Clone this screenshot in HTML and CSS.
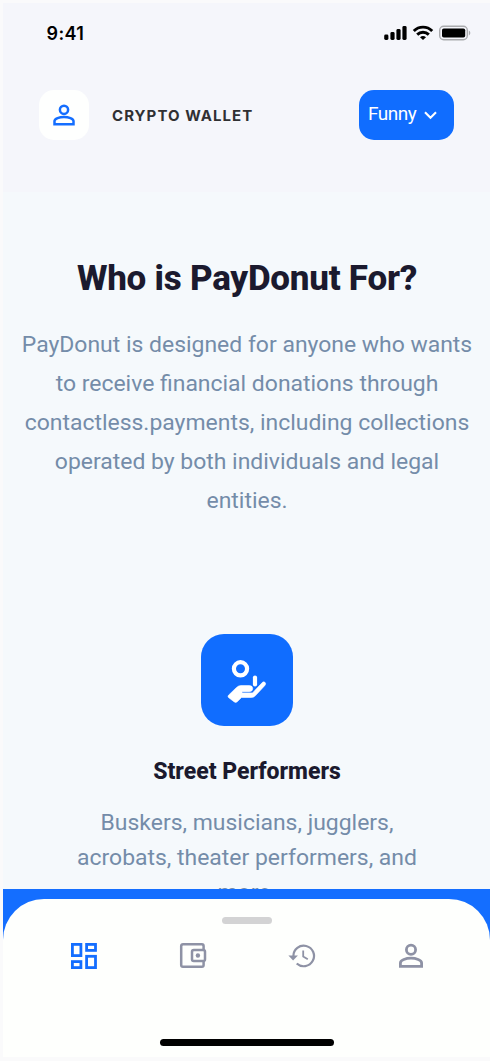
FILE: index.html
```html
<!DOCTYPE html>
<html lang="en">
<head>
<meta charset="utf-8">
<title>Crypto Wallet</title>
<link rel="stylesheet" href="styles.css">
</head>
<body>
<div class="phone">
  <header class="top">
    <div class="status">
      <span class="time">9:41</span>
      <svg class="status-icons" width="88" height="18" viewBox="0 0 88 18">
        <rect x="1.2" y="10.5" width="4.2" height="5.500" rx="1.400"/>
        <rect x="7.4" y="8" width="4.200" height="8" rx="1.400"/>
        <rect x="13.4" y="5" width="4.200" height="11" rx="1.400"/>
        <rect x="19.4" y="2" width="4.200" height="14" rx="1.400"/>
        <g fill="none" stroke="#000" stroke-width="2.900">
          <path d="M30.800 6.900a13 13 0 0 1 18.400 0"/>
          <path d="M34.200 10.600a8.300 8.300 0 0 1 11.600 0"/>
        </g>
        <path d="M37 13.200a4.600 4.600 0 0 1 6 0L40 16z"/>
        <rect x="56.700" y="2.200" width="27.600" height="13.600" rx="4" fill="none" stroke="#aaabae" stroke-width="1.400"/>
        <rect x="59" y="4.400" width="23.200" height="9.200" rx="1.800"/>
        <path d="M85.800 6.600c2 .8 2 4 0 4.800z" fill="#aaabae"/>
      </svg>
    </div>
    <div class="bar">
      <div class="avatar">
        <svg width="22" height="22" viewBox="0 0 22 22" fill="none" stroke="#146eff" stroke-width="2.500">
          <circle cx="11" cy="5.800" r="4.100"/>
          <path d="M1.500 20.200v-3.100c0-2.500 5-4.200 9.500-4.200s9.500 1.700 9.500 4.200v3.100z"/>
        </svg>
      </div>
      <span class="brand">CRYPTO WALLET</span>
      <div class="pill">
        <span>Funny</span>
        <svg width="13" height="9" viewBox="0 0 13 9" fill="none" stroke="#fff" stroke-width="2.100"><path d="M1 1.300l5.500 5.500L12 1.300"/></svg>
      </div>
    </div>
  </header>
  <main class="content">
    <h1 class="title">Who is PayDonut For?</h1>
    <p class="lead">PayDonut is designed for anyone who wants<br>to receive financial donations through<br>contactless.payments, including collections<br>operated by both individuals and legal<br>entities.</p>
    <div class="feature-icon">
      <svg width="40" height="44" viewBox="0 0 40 44">
        <circle cx="13.500" cy="8.800" r="6.600" fill="none" stroke="#fff" stroke-width="4.200"/>
        <path d="M28 17.500v7" stroke="#fff" stroke-width="4.200" stroke-linecap="round"/>
        <path d="M1.500 35.200 9.500 27.500Q11.500 25.600 14 25.600H22.500Q25.700 25.800 25.700 28.600T22.500 31.700H15V32.900H25.500L35.500 22.300Q37 21.300 38.100 22.500T37.900 25.400L28.500 35.600Q26.800 37.500 24.500 37.500H14.500L10.200 41.800Q8.600 43 7 41.700L1.500 37.500Q.600 36.400 1.500 35.200Z" fill="#fff" stroke="#fff" stroke-width=".6"/>
      </svg>
    </div>
    <h2 class="subtitle">Street Performers</h2>
    <p class="desc">Buskers, musicians, jugglers,<br>acrobats, theater performers, and<br>more.</p>
  </main>
  <footer class="dock">
    <div class="sheet">
      <div class="handle"></div>
      <nav class="tabs">
        <svg width="28" height="28" viewBox="0 0 28 28" fill="none" stroke="#146eff" stroke-width="2.800">
          <rect x="2.400" y="2.400" width="8.500" height="11.200"/><rect x="16.600" y="2.400" width="8.900" height="6"/>
          <rect x="2.400" y="19.600" width="8.500" height="6"/><rect x="16.600" y="14.300" width="8.900" height="11.300"/>
        </svg>
        <svg width="28" height="28" viewBox="0 0 28 28" fill="none" stroke="#8e92a5" stroke-width="2.500">
          <path d="M24.600 8V4q0-1.700-1.700-1.700H4Q2.200 2.300 2.200 4V23q0 1.800 1.800 1.800H22.900Q24.600 24.800 24.600 23V19"/>
          <rect x="13" y="8" width="13" height="11" rx="1.800"/><circle cx="18.900" cy="13.500" r="2.200" fill="#8e92a5" stroke="none"/>
        </svg>
        <svg width="28" height="28" viewBox="0 0 28 28" fill="none" stroke="#8e92a5" stroke-width="2.200">
          <path d="M5.400 14A10.300 10.300 0 1 1 8.700 21.500"/>
          <path d="M.4 13.500H9.900L5.100 18.600Z" fill="#8e92a5" stroke="none"/>
          <path d="M15.200 8.500V14.500L19.800 17.300" stroke-width="1.800"/>
        </svg>
        <svg width="28" height="28" viewBox="0 0 28 28" fill="none" stroke="#8e92a5" stroke-width="2.800">
          <circle cx="14" cy="7.800" r="4.600"/>
          <path d="M3.400 24.400v-3.500c0-2.800 5.600-4.700 10.600-4.700s10.600 1.900 10.600 4.700v3.500z"/>
        </svg>
      </nav>
      <div class="home"></div>
    </div>
  </footer>
</div>
</body>
</html>
```
FILE: styles.css
```css
* { box-sizing: border-box; }
body { margin: 0; background: #fafafb; overflow: hidden; }
.phone {
  height: 1061px;
  padding: 3px 0 4px 3px;
  display: flex;
  flex-direction: column;
  font-family: Roboto, sans-serif;
}
.top { height: 189px; flex: none; background: #f5f6fb; }
.status { display: flex; justify-content: space-between; padding: 20px 19px 0 43.5px; height: 87px; }
.time { font: 600 18px/22px Inter, sans-serif; letter-spacing: .4px; color: #000; }
.status-icons { margin-top: 1px; }
.bar { display: flex; align-items: center; padding: 0 36px; }
.avatar {
  width: 50px; height: 50px; border-radius: 15px; background: #fefffe;
  display: grid; place-items: center;
}
.brand {
  margin: 2px auto 0 23px;
  font: 700 15px/20px Inter, sans-serif;
  letter-spacing: 1.05px; color: #303033;
}
.pill {
  width: 95px; height: 50px; border-radius: 15px; background: #106dff; color: #fff;
  display: flex; align-items: center; padding: 0 0 3px 9px; gap: 8px; font-size: 19px;
  letter-spacing: -.5px;
}
.pill svg { margin-top: 4px; }
.content {
  flex: none; height: 697px; overflow: hidden; background: #f5f9fc;
  display: flex; flex-direction: column; align-items: center; padding-left: 1px;
  text-align: center; white-space: nowrap; color: #748ca9;
}
.title { margin: 66px 0 0; font-size: 35px; line-height: 42px; font-weight: 800; letter-spacing: -.25px; color: #1b1a2e; }
.lead { margin: 25px 0 0; font-size: 22.95px; line-height: 39px; }
.feature-icon {
  flex: none; width: 92px; height: 92px; margin: 114px 1px 0 0; border-radius: 23px; background: #106dff;
  display: grid; place-items: center; padding-top: 3px;
}
.subtitle { margin: 31px 0 0; font-size: 23px; line-height: 30px; font-weight: 800; color: #1b1a2e; }
.desc { margin: 18px 0 0; font-size: 22.95px; line-height: 35px; }
.dock { flex: 1; padding-top: 10px; background: linear-gradient(#146eff 60px, #fefffd 60px); }
.sheet {
  height: 100%; border-radius: 41px 41px 0 0; background: #fefffd;
  display: flex; flex-direction: column; align-items: center; padding-top: 18px;
}
.handle { width: 50px; height: 7px; border-radius: 4px; background: #d3d3d4; }
.tabs { width: 100%; display: flex; justify-content: space-between; padding: 18px 65px 0 67px; }
.home { width: 174px; height: 7px; border-radius: 4px; background: #000; margin-top: 69px; }
```
